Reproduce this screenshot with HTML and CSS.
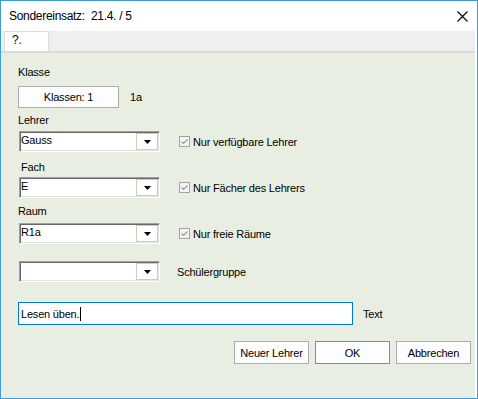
FILE: index.html
```html
<!DOCTYPE html>
<html lang="de">
<head>
<meta charset="utf-8">
<title>Sondereinsatz</title>
<link rel="stylesheet" href="styles.css">
</head>
<body>
<div class="window">
  <div class="titlebar">
    <span class="title">Sondereinsatz:  21.4. / 5</span>
    <svg class="close" width="11" height="11" viewBox="0 0 11 11"><path d="M0.5 0.5 L10.5 10.5 M10.5 0.5 L0.5 10.5" stroke="#000" stroke-width="1.1" fill="none"/></svg>
  </div>
  <div class="tabstrip">
    <div class="tab">?.</div>
  </div>
  <div class="content">
    <div class="label">Klasse</div>
    <div class="row row-klasse">
      <div class="btn btn-klassen">Klassen: 1</div>
      <span class="value">1a</span>
    </div>
    <div class="label lbl-lehrer">Lehrer</div>
    <div class="row row-gauss">
      <div class="combo"><span class="combo-text">Gauss</span><span class="drop"><svg width="7" height="4" viewBox="0 0 7 4"><path d="M0 0 H7 L3.5 4 Z" fill="#000"/></svg></span></div>
      <span class="check"><svg class="box" width="11" height="11" viewBox="0 0 11 11"><rect x="0.5" y="0.5" width="10" height="10" fill="#f4f4f4" stroke="#a3a3a3"/><path d="M2.5 5.5 L4.5 7.5 L8.5 3.5" stroke="#9a9a9a" stroke-width="1.2" fill="none"/></svg>Nur verfügbare Lehrer</span>
    </div>
    <div class="label lbl-fach">Fach</div>
    <div class="row row-fach">
      <div class="combo"><span class="combo-text">E</span><span class="drop"><svg width="7" height="4" viewBox="0 0 7 4"><path d="M0 0 H7 L3.5 4 Z" fill="#000"/></svg></span></div>
      <span class="check"><svg class="box" width="11" height="11" viewBox="0 0 11 11"><rect x="0.5" y="0.5" width="10" height="10" fill="#f4f4f4" stroke="#a3a3a3"/><path d="M2.5 5.5 L4.5 7.5 L8.5 3.5" stroke="#9a9a9a" stroke-width="1.2" fill="none"/></svg>Nur Fächer des Lehrers</span>
    </div>
    <div class="label lbl-raum">Raum</div>
    <div class="row row-raum">
      <div class="combo"><span class="combo-text">R1a</span><span class="drop"><svg width="7" height="4" viewBox="0 0 7 4"><path d="M0 0 H7 L3.5 4 Z" fill="#000"/></svg></span></div>
      <span class="check"><svg class="box" width="11" height="11" viewBox="0 0 11 11"><rect x="0.5" y="0.5" width="10" height="10" fill="#f4f4f4" stroke="#a3a3a3"/><path d="M2.5 5.5 L4.5 7.5 L8.5 3.5" stroke="#9a9a9a" stroke-width="1.2" fill="none"/></svg>Nur freie Räume</span>
    </div>
    <div class="row row-gruppe">
      <div class="combo"><span class="combo-text"></span><span class="drop"><svg width="7" height="4" viewBox="0 0 7 4"><path d="M0 0 H7 L3.5 4 Z" fill="#000"/></svg></span></div>
      <span class="side-label">Schülergruppe</span>
    </div>
    <div class="row row-text">
      <div class="textbox">Lesen üben.<span class="caret"></span></div>
      <span class="text-label">Text</span>
    </div>
    <div class="row buttons">
      <div class="btn btn-action">Neuer Lehrer</div>
      <div class="btn btn-action btn-default">OK</div>
      <div class="btn btn-action">Abbrechen</div>
    </div>
  </div>
</div>
</body>
</html>
```
FILE: styles.css
```css
html, body {
  margin: 0;
  padding: 0;
  background: #ffffff;
}

.window {
  width: 478px;
  height: 399px;
  box-sizing: border-box;
  border: 1px solid #3d9bd8;
  background: #ffffff;
  display: flex;
  flex-direction: column;
  font-family: "Liberation Sans", Arial, sans-serif;
  font-size: 11px;
  letter-spacing: -0.2px;
  color: #000000;
}

.titlebar {
  height: 30px;
  flex: none;
  display: flex;
  align-items: center;
  justify-content: space-between;
  padding-left: 8px;
}

.title {
  font-size: 12px;
  letter-spacing: -0.3px;
  white-space: pre;
}

.close {
  display: block;
  margin-right: 9px;
}

.tabstrip {
  flex: none;
  height: 22px;
  margin-right: 2px;
  background: #efefef;
  box-shadow: inset 0 -2px 0 #d9d9d9;
  display: flex;
  align-items: flex-start;
}

.tab {
  margin-left: 3px;
  width: 45px;
  height: 20px;
  box-sizing: border-box;
  background: #ffffff;
  border: 1px solid #dcdcdc;
  border-bottom: none;
  padding-left: 7px;
  font-size: 12px;
  line-height: 17px;
}

.content {
  flex: 1;
  margin-right: 2px;
  background: #e9eee3;
  padding: 13px 4px 0 17px;
}

.label {
  height: 13px;
  line-height: 13px;
}

.lbl-lehrer { margin-top: 6px; }
.lbl-fach { margin-top: 9px; padding-left: 3px; }
.lbl-raum { margin-top: 7px; }

.row {
  display: flex;
  align-items: center;
}

.row-klasse { margin-top: 7px; }
.row-gauss { margin-top: 4px; }
.row-fach { margin-top: 3px; }
.row-raum { margin-top: 5px; }
.row-gruppe { margin-top: 17px; }
.row-text { margin-top: 20px; }

.btn {
  box-sizing: border-box;
  background: #fdfdfd;
  border: 1px solid #adadad;
  display: flex;
  align-items: center;
  justify-content: center;
}

.btn-klassen {
  width: 101px;
  height: 22px;
}

.value {
  margin-left: 11px;
}

.combo {
  margin-left: 1px;
  width: 141px;
  height: 21px;
  box-sizing: border-box;
  border: 1px solid;
  border-color: #a0a0a0 #ffffff #ffffff #a0a0a0;
  box-shadow: inset 1px 1px 0 #696969, inset -1px -1px 0 #e3e3e3;
  padding: 1px;
  background: #ffffff;
  display: flex;
}

.combo-text {
  flex: 1;
  line-height: 15px;
  padding-left: 0;
}

.drop {
  width: 22px;
  height: 17px;
  box-sizing: border-box;
  border: 1px solid #c3d3b3;
  background: #ffffff;
  display: flex;
  align-items: center;
  justify-content: center;
}

.drop svg {
  display: block;
  margin-top: 1px;
}

.check {
  margin-left: 19px;
  display: flex;
  align-items: center;
}

.box {
  display: block;
  margin-right: 3px;
}

.side-label {
  margin-left: 17px;
}

.textbox {
  width: 335px;
  height: 23px;
  box-sizing: border-box;
  border: 1px solid #0078d7;
  background: #ffffff;
  padding-left: 2px;
  display: flex;
  align-items: center;
}

.caret {
  display: inline-block;
  width: 1px;
  height: 14px;
  background: #000000;
  margin-left: 1px;
}

.text-label {
  margin-left: 10px;
}

.buttons {
  margin-top: 16px;
  justify-content: flex-end;
  gap: 6px;
}

.btn-action {
  width: 75px;
  height: 23px;
}

.btn-default {
  border-color: #7b9763;
}
```
